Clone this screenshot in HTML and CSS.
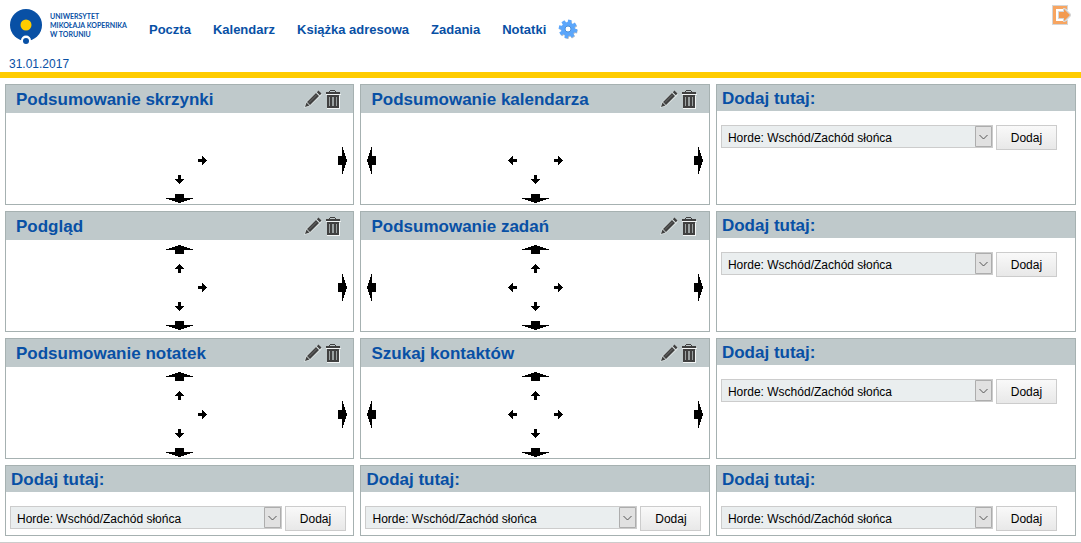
FILE: index.html
```html
<!DOCTYPE html>
<html lang="pl">
<head>
<meta charset="UTF-8">
<meta name="viewport" content="width=device-width, initial-scale=1.0">
<title>Horde</title>
<link rel="stylesheet" href="styles.css">
</head>
<body>
<!-- Shared icons -->
<svg class="icon-defs" aria-hidden="true">
  <symbol id="small-up" viewBox="0 0 9 9"><path d="M4 0h1v1h1v1h1v1h1v1h1v1H6v4H3V5H0V4h1V3h1V2h1V1h1z"/></symbol>
  <symbol id="small-down" viewBox="0 0 9 9"><path d="M3 0h3v4h3v1H8v1H7v1H6v1H5v1H4V8H3V7H2V6H1V5H0V4h3z"/></symbol>
  <symbol id="small-left" viewBox="0 0 9 9"><path d="M4 0h1v3h4v3H5v3H4V8H3V7H2V6H1V5H0V4h1V3h1V2h1V1h1z"/></symbol>
  <symbol id="small-right" viewBox="0 0 9 9"><path d="M4 0h1v1h1v1h1v1h1v1h1v1H8v1H7v1H6v1H5v1H4V6H0V3h4z"/></symbol>
  <symbol id="big-up" viewBox="0 0 27 9"><path d="M12 0h3v1h3v1h3v1h3v1h3v1h-9v4H9V5H0V4h3V3h3V2h3V1h3z"/></symbol>
  <symbol id="big-down" viewBox="0 0 27 9"><path d="M9 0h9v4h9v1h-3v1h-3v1h-3v1h-3v1h-3V8H9V7H6V6H3V5H0V4h9z"/></symbol>
  <symbol id="big-left" viewBox="0 0 9 27"><path d="M4 0h1v9h4v9H5v9H4v-3H3v-3H2v-3H1v-3H0v-3h1V9h1V6h1V3h1z"/></symbol>
  <symbol id="big-right" viewBox="0 0 9 27"><path d="M4 0h1v3h1v3h1v3h1v3h1v3H8v3H7v3H6v3H5v3H4v-9H0V9h4z"/></symbol>
  <symbol id="pencil" viewBox="0 0 18 18">
    <path fill="#dbe2e2" d="M0 18l2-6L13 2l2-1 3 3-1 2L6 16z"/>
    <path fill="#404040" d="M1 17l1.500-4.500 3 3zM3 12L12 3l3 3-9 9zM12.800 2.200L14.500.6l3 3-1.700 1.600z"/>
    <path stroke="#6c6c6c" d="M5 12.500L12.500 5"/>
  </symbol>
  <symbol id="trash" viewBox="0 0 16 20">
    <path fill="#f2f5f5" d="M2 7h13v13H2zM1 5h15v1H1z"/>
    <path fill="#404040" d="M5 1h5v1h1v1h4v2H1V3h3V2h1zM5 2v1h5V2zM2 6h12v13H2z"/>
    <path fill="#9ba1a1" d="M4 8h1v9H4zM7 8h2v9H7zM11 8h1v9h-1z"/>
  </symbol>
</svg>

<header class="page-header">
  <div class="header-row">
    <a class="logo" href="#">
      <svg width="34" height="37" viewBox="0 0 34 37" aria-hidden="true">
        <circle cx="17" cy="17" r="16" fill="#0850a5"/>
        <circle cx="17" cy="17" r="5.500" fill="#fc0"/>
        <circle cx="17" cy="32.500" r="5" fill="#fff"/>
        <circle cx="17" cy="33" r="3" fill="#0850a5"/>
      </svg>
      <span>UNIWERSYTET<br>MIKOŁAJA KOPERNIKA<br>W TORUNIU</span>
    </a>
    <nav class="main-nav">
      <a href="#">Poczta</a>
      <a href="#">Kalendarz</a>
      <a href="#">Książka adresowa</a>
      <a href="#">Zadania</a>
      <a href="#">Notatki</a>
      <a class="settings" href="#" aria-label="Ustawienia">
        <svg width="20" height="20" viewBox="-10 -10 20 20">
          <g fill="#b4bcc4" transform="translate(.6 .9)">
            <circle r="7"/>
            <path d="M-1.800-9h3.600V9h-3.600zM-9-1.800H9v3.600H-9z" transform="rotate(12)"/>
            <path d="M-1.800-9h3.600V9h-3.600zM-9-1.800H9v3.600H-9z" transform="rotate(57)"/>
          </g>
          <g fill="#5ba6fb">
            <circle r="7"/>
            <path d="M-1.800-9.300h3.600V9.300h-3.600zM-9.300-1.800H9.300v3.600H-9.300z" transform="rotate(12)"/>
            <path d="M-1.800-9.300h3.600V9.300h-3.600zM-9.300-1.800H9.300v3.600H-9.300z" transform="rotate(57)"/>
          </g>
          <circle r="3" fill="#fff" stroke="#4b8fd8"/>
        </svg>
      </a>
    </nav>
    <a class="logout" href="#" aria-label="Wyloguj">
      <svg width="20" height="20" viewBox="0 0 20 20">
        <path fill="#d6d6d6" d="M0 0h16v5h-4v10h4v5H0z"/>
        <path fill="#f7a561" d="M1 1h14v3H4v12h11v3H1z"/>
        <path fill="#fff" d="M4 4h9v12H4z"/>
        <path fill="#d6d6d6" d="M6 6h5V3h2l6 6v2l-6 6h-2v-3H6z"/>
        <path fill="#f39a4f" d="M7 7h5V4l6 6-6 6v-3H7z"/>
      </svg>
    </a>
  </div>
  <div class="date">31.01.2017</div>
</header>

<main class="portal">
  <section class="block">
    <div class="block-title">
      <h2>Podsumowanie skrzynki</h2>
      <a href="#" aria-label="Edytuj"><svg width="18" height="18"><use href="#pencil"/></svg></a>
      <a href="#" aria-label="Usuń"><svg width="16" height="20"><use href="#trash"/></svg></a>
    </div>
    <div class="block-arrows">
      <div class="center-arrows">
        <a class="right" href="#" aria-label="W prawo"><svg width="9" height="9"><use href="#small-right"/></svg></a>
        <a class="down" href="#" aria-label="W dół"><svg width="9" height="9"><use href="#small-down"/></svg></a>
        <a class="bottom" href="#" aria-label="Rozszerz w dół"><svg width="27" height="9"><use href="#big-down"/></svg></a>
      </div>
      <a class="far-right" href="#" aria-label="Rozszerz w prawo"><svg width="9" height="27"><use href="#big-right"/></svg></a>
    </div>
  </section>

  <section class="block">
    <div class="block-title">
      <h2>Podsumowanie kalendarza</h2>
      <a href="#" aria-label="Edytuj"><svg width="18" height="18"><use href="#pencil"/></svg></a>
      <a href="#" aria-label="Usuń"><svg width="16" height="20"><use href="#trash"/></svg></a>
    </div>
    <div class="block-arrows">
      <a class="far-left" href="#" aria-label="Rozszerz w lewo"><svg width="9" height="27"><use href="#big-left"/></svg></a>
      <div class="center-arrows">
        <a class="left" href="#" aria-label="W lewo"><svg width="9" height="9"><use href="#small-left"/></svg></a>
        <a class="right" href="#" aria-label="W prawo"><svg width="9" height="9"><use href="#small-right"/></svg></a>
        <a class="down" href="#" aria-label="W dół"><svg width="9" height="9"><use href="#small-down"/></svg></a>
        <a class="bottom" href="#" aria-label="Rozszerz w dół"><svg width="27" height="9"><use href="#big-down"/></svg></a>
      </div>
      <a class="far-right" href="#" aria-label="Rozszerz w prawo"><svg width="9" height="27"><use href="#big-right"/></svg></a>
    </div>
  </section>

  <section class="block">
    <h2 class="add-title"><label for="add-1">Dodaj tutaj:</label></h2>
    <form class="add-form">
      <select id="add-1"><option>Horde: Wschód/Zachód słońca</option></select>
      <button type="button">Dodaj</button>
    </form>
  </section>

  <section class="block">
    <div class="block-title">
      <h2>Podgląd</h2>
      <a href="#" aria-label="Edytuj"><svg width="18" height="18"><use href="#pencil"/></svg></a>
      <a href="#" aria-label="Usuń"><svg width="16" height="20"><use href="#trash"/></svg></a>
    </div>
    <div class="block-arrows">
      <div class="center-arrows">
        <a class="top" href="#" aria-label="Rozszerz w górę"><svg width="27" height="9"><use href="#big-up"/></svg></a>
        <a class="up" href="#" aria-label="W górę"><svg width="9" height="9"><use href="#small-up"/></svg></a>
        <a class="right" href="#" aria-label="W prawo"><svg width="9" height="9"><use href="#small-right"/></svg></a>
        <a class="down" href="#" aria-label="W dół"><svg width="9" height="9"><use href="#small-down"/></svg></a>
        <a class="bottom" href="#" aria-label="Rozszerz w dół"><svg width="27" height="9"><use href="#big-down"/></svg></a>
      </div>
      <a class="far-right" href="#" aria-label="Rozszerz w prawo"><svg width="9" height="27"><use href="#big-right"/></svg></a>
    </div>
  </section>

  <section class="block">
    <div class="block-title">
      <h2>Podsumowanie zadań</h2>
      <a href="#" aria-label="Edytuj"><svg width="18" height="18"><use href="#pencil"/></svg></a>
      <a href="#" aria-label="Usuń"><svg width="16" height="20"><use href="#trash"/></svg></a>
    </div>
    <div class="block-arrows">
      <a class="far-left" href="#" aria-label="Rozszerz w lewo"><svg width="9" height="27"><use href="#big-left"/></svg></a>
      <div class="center-arrows">
        <a class="top" href="#" aria-label="Rozszerz w górę"><svg width="27" height="9"><use href="#big-up"/></svg></a>
        <a class="up" href="#" aria-label="W górę"><svg width="9" height="9"><use href="#small-up"/></svg></a>
        <a class="left" href="#" aria-label="W lewo"><svg width="9" height="9"><use href="#small-left"/></svg></a>
        <a class="right" href="#" aria-label="W prawo"><svg width="9" height="9"><use href="#small-right"/></svg></a>
        <a class="down" href="#" aria-label="W dół"><svg width="9" height="9"><use href="#small-down"/></svg></a>
        <a class="bottom" href="#" aria-label="Rozszerz w dół"><svg width="27" height="9"><use href="#big-down"/></svg></a>
      </div>
      <a class="far-right" href="#" aria-label="Rozszerz w prawo"><svg width="9" height="27"><use href="#big-right"/></svg></a>
    </div>
  </section>

  <section class="block">
    <h2 class="add-title"><label for="add-2">Dodaj tutaj:</label></h2>
    <form class="add-form">
      <select id="add-2"><option>Horde: Wschód/Zachód słońca</option></select>
      <button type="button">Dodaj</button>
    </form>
  </section>

  <section class="block">
    <div class="block-title">
      <h2>Podsumowanie notatek</h2>
      <a href="#" aria-label="Edytuj"><svg width="18" height="18"><use href="#pencil"/></svg></a>
      <a href="#" aria-label="Usuń"><svg width="16" height="20"><use href="#trash"/></svg></a>
    </div>
    <div class="block-arrows">
      <div class="center-arrows">
        <a class="top" href="#" aria-label="Rozszerz w górę"><svg width="27" height="9"><use href="#big-up"/></svg></a>
        <a class="up" href="#" aria-label="W górę"><svg width="9" height="9"><use href="#small-up"/></svg></a>
        <a class="right" href="#" aria-label="W prawo"><svg width="9" height="9"><use href="#small-right"/></svg></a>
        <a class="down" href="#" aria-label="W dół"><svg width="9" height="9"><use href="#small-down"/></svg></a>
        <a class="bottom" href="#" aria-label="Rozszerz w dół"><svg width="27" height="9"><use href="#big-down"/></svg></a>
      </div>
      <a class="far-right" href="#" aria-label="Rozszerz w prawo"><svg width="9" height="27"><use href="#big-right"/></svg></a>
    </div>
  </section>

  <section class="block">
    <div class="block-title">
      <h2>Szukaj kontaktów</h2>
      <a href="#" aria-label="Edytuj"><svg width="18" height="18"><use href="#pencil"/></svg></a>
      <a href="#" aria-label="Usuń"><svg width="16" height="20"><use href="#trash"/></svg></a>
    </div>
    <div class="block-arrows">
      <a class="far-left" href="#" aria-label="Rozszerz w lewo"><svg width="9" height="27"><use href="#big-left"/></svg></a>
      <div class="center-arrows">
        <a class="top" href="#" aria-label="Rozszerz w górę"><svg width="27" height="9"><use href="#big-up"/></svg></a>
        <a class="up" href="#" aria-label="W górę"><svg width="9" height="9"><use href="#small-up"/></svg></a>
        <a class="left" href="#" aria-label="W lewo"><svg width="9" height="9"><use href="#small-left"/></svg></a>
        <a class="right" href="#" aria-label="W prawo"><svg width="9" height="9"><use href="#small-right"/></svg></a>
        <a class="down" href="#" aria-label="W dół"><svg width="9" height="9"><use href="#small-down"/></svg></a>
        <a class="bottom" href="#" aria-label="Rozszerz w dół"><svg width="27" height="9"><use href="#big-down"/></svg></a>
      </div>
      <a class="far-right" href="#" aria-label="Rozszerz w prawo"><svg width="9" height="27"><use href="#big-right"/></svg></a>
    </div>
  </section>

  <section class="block">
    <h2 class="add-title"><label for="add-3">Dodaj tutaj:</label></h2>
    <form class="add-form">
      <select id="add-3"><option>Horde: Wschód/Zachód słońca</option></select>
      <button type="button">Dodaj</button>
    </form>
  </section>

  <!-- Last row, new blocks only -->
  <section class="block">
    <h2 class="add-title"><label for="add-4">Dodaj tutaj:</label></h2>
    <form class="add-form">
      <select id="add-4"><option>Horde: Wschód/Zachód słońca</option></select>
      <button type="button">Dodaj</button>
    </form>
  </section>

  <section class="block">
    <h2 class="add-title"><label for="add-5">Dodaj tutaj:</label></h2>
    <form class="add-form">
      <select id="add-5"><option>Horde: Wschód/Zachód słońca</option></select>
      <button type="button">Dodaj</button>
    </form>
  </section>

  <section class="block">
    <h2 class="add-title"><label for="add-6">Dodaj tutaj:</label></h2>
    <form class="add-form">
      <select id="add-6"><option>Horde: Wschód/Zachód słońca</option></select>
      <button type="button">Dodaj</button>
    </form>
  </section>
</main>
</body>
</html>
```
FILE: styles.css
```css
:root {
  --blue: #0850a5;
  --yellow: #fc0;
  --title-bg: #bfc9cb;
  --block-border: #a6b1b1;
}

* {
  box-sizing: border-box;
}

body {
  margin: 0;
  background: #fff;
  color: #000;
  font-family: "Liberation Sans", Arial, sans-serif;
  font-size: 12px;
}

a {
  color: inherit;
  text-decoration: none;
}

svg {
  display: block;
}

.icon-defs {
  display: none;
}

/* Header */
.page-header {
  border-bottom: 6px solid var(--yellow);
  color: var(--blue);
}

.header-row {
  display: flex;
  align-items: flex-start;
  padding: 0 9px;
}

.logo {
  display: flex;
  gap: 7px;
  width: 140px;
  padding-top: 8px;
  font: bold 7px/9px Lato, sans-serif;
  white-space: nowrap;
}

.logo span {
  padding-top: 4px;
}

.main-nav {
  display: flex;
  align-items: center;
  gap: 22px;
  height: 56px;
  padding-top: 2px;
  font-size: 13px;
  font-weight: bold;
}

.settings {
  margin-left: -10px;
}

.logout {
  margin-left: auto;
  padding-top: 5px;
}

.date {
  padding: 0 9px;
  font-size: 12px;
  line-height: 16px;
}

/* Blocks */
.portal {
  display: grid;
  grid-template-columns: 33fr 33fr 34fr;
  gap: 6px;
  padding: 6px 5px;
  border-bottom: 1px solid #ccc;
}

.block {
  border: 1px solid var(--block-border);
}

h2 {
  margin: 0;
  color: var(--blue);
  font-size: 17px;
  font-weight: bold;
}

.block-title {
  display: flex;
  align-items: center;
  gap: 3px;
  height: 28px;
  padding: 0 12px 0 10px;
  background: var(--title-bg);
}

.block-title h2 {
  flex: 1;
  padding-top: 2px;
}

.block-arrows {
  display: grid;
  grid-template-columns: 9px 1fr 9px;
  align-items: center;
  padding: 5px 6px 1px;
}

.far-left {
  grid-column: 1;
}

.far-right {
  grid-column: 3;
  grid-row: 1;
}

.center-arrows {
  grid-column: 2;
  display: grid;
  grid-template-columns: 9px 27px 9px;
  grid-template-rows: repeat(5, 9px);
  gap: 10px 5px;
  justify-content: center;
  justify-items: center;
}

.top { grid-area: 1 / 2; }
.up { grid-area: 2 / 2; }
.left { grid-area: 3 / 1; }
.right { grid-area: 3 / 3; }
.down { grid-area: 4 / 2; }
.bottom { grid-area: 5 / 2; }

/* Add new block */
.add-title {
  padding: 2px 5px 0;
  background: var(--title-bg);
  line-height: 24px;
}

.add-form {
  display: flex;
  align-items: flex-start;
  gap: 3px;
  padding: 14px 4px 4px;
}

.add-form select {
  appearance: none;
  width: 272px;
  height: 23px;
  padding: 2px 20px 0 6px;
  border: 1px solid #ccc;
  border-radius: 0;
  background: #eaeeef url("data:image/svg+xml,%3Csvg xmlns='http://www.w3.org/2000/svg' width='17' height='21'%3E%3Cpath fill='%23e1e1e1' stroke='%23adadad' d='M.5.5h16v20H.5z'/%3E%3Cpath fill='none' stroke='%23555' d='M4.500 9l4 4 4-4'/%3E%3C/svg%3E") no-repeat right center;
  color: #000;
  font-family: inherit;
  font-size: 12px;
}

.add-form button {
  width: 61px;
  height: 25px;
  padding: 0;
  border: 1px solid #ccc;
  background: linear-gradient(#f9f9f9, #e8e8e8);
  color: #000;
  font-family: inherit;
  font-size: 12px;
}
```
